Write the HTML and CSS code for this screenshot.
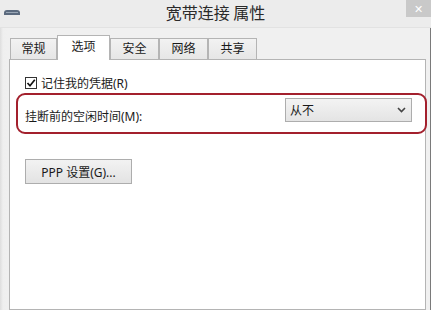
FILE: index.html
```html
<!DOCTYPE html>
<html>
  <head>
    <title>宽带连接 属性</title>
    <link rel="stylesheet" href="styles.css">
  </head>
  <body>
    <div class="window">
      <div class="titlebar">
        <svg class="app-icon" width="18" height="7" viewBox="0 0 18 7">
          <path d="M1 6 L1 4 Q1 1 4 1 L14 1 Q17 1 17 4 L17 6 Z" fill="#5b6a7e" />
          <rect x="3" y="3" width="12" height="1" fill="#9aa7b6" />
        </svg>
        <div class="title">宽带连接 属性</div>
        <div class="close">✕</div>
      </div>
      <div class="client">
        <div class="tabs">
          <div class="tab first">常规</div>
          <div class="tab active">选项</div>
          <div class="tab">安全</div>
          <div class="tab">网络</div>
          <div class="tab">共享</div>
        </div>
        <div class="panel">
          <div class="check-row">
            <span class="checkbox">
              <svg width="10" height="10" viewBox="0 0 10 10">
                <path d="M1.5 5 L4 7.8 L8.8 1.8" fill="none" stroke="#111" stroke-width="1.7" />
              </svg>
            </span>
            <span>记住我的凭据(R)</span>
          </div>
          <div class="idle-row">
            <span class="idle-label">挂断前的空闲时间(M):</span>
            <div class="select">
              <span>从不</span>
              <svg width="9" height="6" viewBox="0 0 9 6">
                <path d="M1 1 L4.5 4.5 L8 1" fill="none" stroke="#444" stroke-width="1.6" />
              </svg>
            </div>
          </div>
          <button class="ppp">PPP 设置(G)...</button>
        </div>
      </div>
    </div>
  </body>
</html>
```

FILE: styles.css
```css
/* Page */
body {
  margin: 0;
  font-family: "Noto Sans", "Noto Sans CJK SC", sans-serif;
  font-size: 12px;
  color: #1a1a1a;
}

/* Window frame */
.window {
  width: 431px;
  height: 310px;
  display: flex;
  flex-direction: column;
  background-color: #ececec;
  overflow: hidden;
}

/* Title bar */
.titlebar {
  height: 28px;
  display: grid;
  grid-template-columns: 1fr auto 1fr;
  align-items: center;
  border-bottom: 1px solid #e2e2e2;
  box-sizing: border-box;
}

.app-icon {
  margin-left: 3px;
  margin-top: -2px;
}

.title {
  font-family: "Noto Sans CJK SC", sans-serif;
  font-size: 16px;
  color: #2a2a2a;
  margin-top: -3px;
}

.close {
  justify-self: end;
  align-self: start;
  width: 25px;
  height: 17px;
  background-color: #c9c9c9;
  color: #fff;
  font-size: 11px;
  line-height: 17px;
  text-align: center;
}

/* Client area */
.client {
  flex: 1;
  display: flex;
  flex-direction: column;
  padding: 7px 4px 0 9px;
  background: linear-gradient(to right, #dedede 0, #efefef 3px, #f0f0f0 7px);
  border-right: 1px solid #7a7a7a;
  min-height: 0;
}

/* Tabs */
.tabs {
  display: flex;
  padding-left: 1px;
  height: 24px;
}

.tab {
  width: 49px;
  height: 21px;
  margin-top: 3px;
  box-sizing: border-box;
  border: 1px solid #b4b4b4;
  border-bottom: none;
  background: linear-gradient(#f2f2f2, #e6e6e6);
  text-align: center;
  line-height: 20px;
}

.tab.first {
  width: 47px;
}

.tab.active {
  width: 53px;
  height: 25px;
  margin-top: 0;
  background: #fff;
  position: relative;
  line-height: 22px;
}

/* Tab panel */
.panel {
  flex: 1;
  background-color: #fff;
  border: 1px solid #b4b4b4;
  display: flex;
  flex-direction: column;
  align-items: flex-start;
}

.check-row {
  display: flex;
  align-items: center;
  margin-top: 17px;
  margin-left: 15px;
  height: 12px;
}

.checkbox {
  width: 12px;
  height: 12px;
  box-sizing: border-box;
  border: 1px solid #333;
  background: #fff;
  display: flex;
  align-items: center;
  justify-content: center;
  margin-right: 4px;
}

/* Highlighted idle time row */
.idle-row {
  align-self: stretch;
  display: flex;
  align-items: flex-start;
  justify-content: space-between;
  height: 41px;
  box-sizing: border-box;
  margin: 4px -2px 0 6px;
  padding: 3px 13px 0 7px;
  border: 2px solid #a3202d;
  border-radius: 9px;
}

.idle-label {
  margin-top: 9px;
}

.select {
  width: 127px;
  height: 24px;
  box-sizing: border-box;
  border: 1px solid #adadad;
  background: linear-gradient(#f3f3f3, #e4e4e4);
  display: flex;
  align-items: center;
  justify-content: space-between;
  padding: 0 5px 0 4px;
}

/* PPP button */
.ppp {
  margin-top: 25px;
  margin-left: 15px;
  width: 107px;
  height: 25px;
  border: 1px solid #adadad;
  background: linear-gradient(#f2f2f2, #e3e3e3);
  font-family: "Noto Sans", "Noto Sans CJK SC", sans-serif;
  font-size: 12px;
  color: #1a1a1a;
  padding: 0;
}
```
